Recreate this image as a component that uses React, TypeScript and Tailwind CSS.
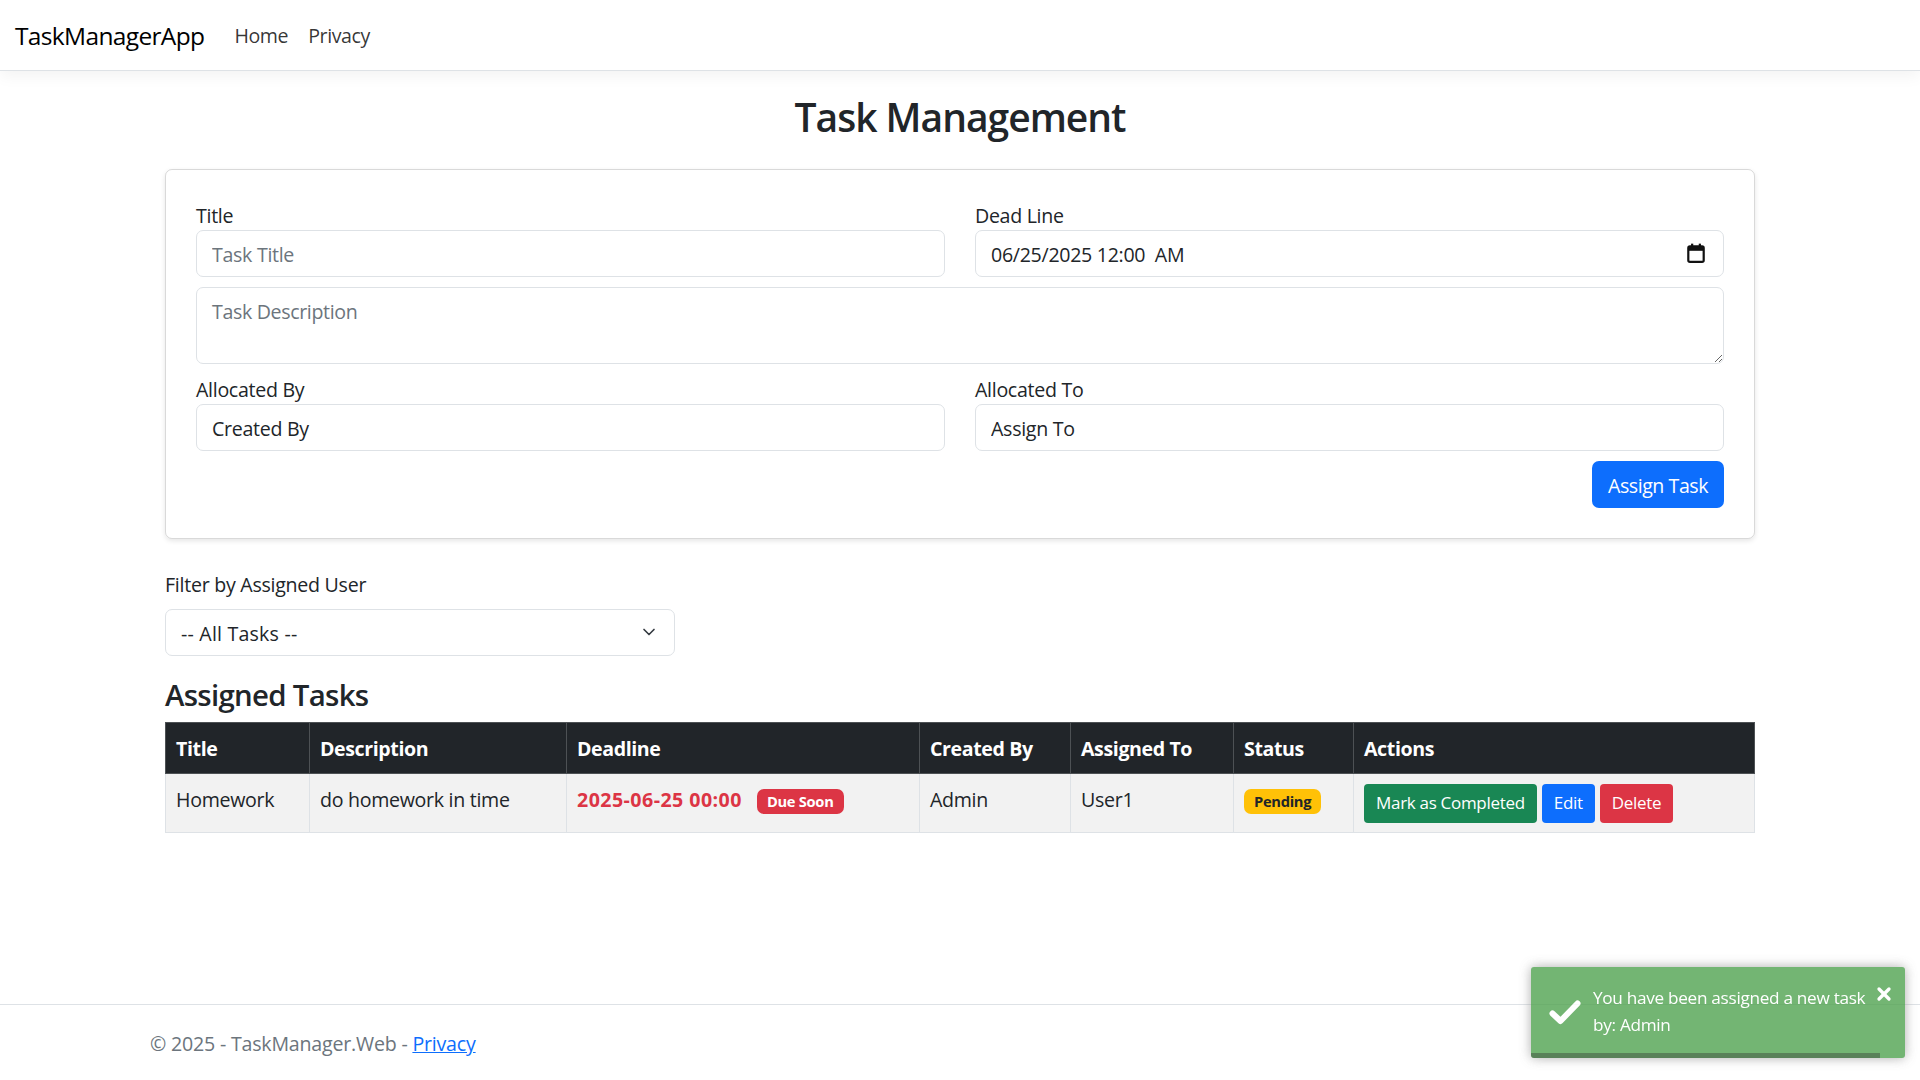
import { ChevronDown, X } from 'lucide-react';

const inputClass =
  'w-full h-[47px] px-[15px] pt-[2px] bg-white border border-[#dee2e6] rounded-[7px] text-[19.6px] text-[#212529] placeholder:text-[#6c757d] outline-none';

const columns = [
  { label: 'Title', width: 'w-[144px]' },
  { label: 'Description', width: 'w-[257px]' },
  { label: 'Deadline', width: 'w-[353px]' },
  { label: 'Created By', width: 'w-[151px]' },
  { label: 'Assigned To', width: 'w-[163px]' },
  { label: 'Status', width: 'w-[120px]' },
  { label: 'Actions', width: 'w-[401px]' },
];

const cellClass = 'px-[10px] pt-[11px] border border-[#dee2e6] align-top';

const Field = ({ label, children }: { label: string; children: React.ReactNode }) => (
  <div className="flex-1">
    <label className="block h-[30px] leading-[32px] text-[19.6px] text-[#212529]">{label}</label>
    {children}
  </div>
);

export default function App() {
  return (
    <div className="min-h-screen flex flex-col bg-white text-[#212529] text-[19.6px] tracking-[-0.3px] font-['Open_Sans',sans-serif]">
      {/* Navbar */}
      <nav className="h-[71px] shrink-0 flex items-center pl-[15px] pt-[2px] border-b border-[#dee2e6] shadow-[0_5px_15px_rgba(0,0,0,0.05)]">
        <a className="text-[24.5px] tracking-[-0.65px] text-black mr-[30px]">TaskManagerApp</a>
        <a className="text-[19.6px] tracking-[-0.4px] text-black/80 mr-[20px]">Home</a>
        <a className="text-[19.6px] tracking-[-0.4px] text-black/80">Privacy</a>
      </nav>

      <main className="w-[1590px] mx-auto">
        <h1 className="mt-[22px] mb-[29px] h-[47px] leading-[47px] text-center text-[39px] tracking-[-1px] font-semibold">
          Task Management
        </h1>

        {/* Form card */}
        <div className="h-[370px] px-[30px] pt-[30px] border border-black/15 rounded-[7px] shadow-[0_2px_5px_rgba(0,0,0,0.1)]">
          <div className="flex gap-[30px]">
            <Field label="Title">
              <input className={inputClass} placeholder="Task Title" />
            </Field>
            <Field label="Dead Line">
              <div className="relative">
                <input className={`${inputClass} whitespace-pre`} readOnly value="06/25/2025 12:00  AM" />
                <svg className="absolute right-[17px] top-[12px] w-[22px] h-[22px]" viewBox="0 0 20 20" fill="none">
                  <rect x="3" y="4" width="14" height="14" rx="1.5" stroke="#111" strokeWidth="2" />
                  <rect x="3" y="4" width="14" height="4" fill="#111" />
                  <rect x="5.5" y="1.5" width="2" height="3" fill="#111" />
                  <rect x="12.5" y="1.5" width="2" height="3" fill="#111" />
                </svg>
              </div>
            </Field>
          </div>
          <textarea
            className="block w-full h-[77px] mt-[10px] px-[15px] pt-[9px] pb-[8px] border border-[#dee2e6] rounded-[7px] text-[19.6px] tracking-[-0.35px] placeholder:text-[#6c757d] outline-none"
            placeholder="Task Description"
          />
          <div className="flex gap-[30px] mt-[10px]">
            <Field label="Allocated By">
              <input className={inputClass} defaultValue="Created By" />
            </Field>
            <Field label="Allocated To">
              <input className={inputClass} defaultValue="Assign To" />
            </Field>
          </div>
          <div className="flex justify-end mt-[10px]">
            <button className="w-[132px] h-[47px] pt-[2px] bg-[#0d6efd] text-white text-[19.6px] tracking-[-0.45px] rounded-[7px]">
              Assign Task
            </button>
          </div>
        </div>

        {/* Filter */}
        <label className="block mt-[30px] h-[30px] leading-[32px] text-[19.6px] tracking-[-0.27px]">Filter by Assigned User</label>
        <div className="relative w-[510px] mt-[10px]">
          <select className="w-full h-[47px] px-[15px] pt-[2px] appearance-none bg-white border border-[#dee2e6] rounded-[7px] text-[19.6px] tracking-[0.2px] outline-none">
            <option>-- All Tasks --</option>
          </select>
          <ChevronDown className="absolute right-[16px] top-[13px] w-5 h-5 text-[#343a40] pointer-events-none" />
        </div>

        <h3 className="mt-[21px] mb-[9px] h-[36px] leading-[36px] text-[29.4px] tracking-[-0.7px] font-semibold">Assigned Tasks</h3>

        {/* Tasks table */}
        <table className="w-[1589px] table-fixed border-collapse">
          <thead>
            <tr className="h-[51px] bg-[#212529] text-white">
              {columns.map((col) => (
                <th key={col.label} className={`${col.width} px-[10px] pt-[2px] text-left text-[19.6px] tracking-[-0.4px] font-bold border border-[#4d5154]`}>
                  {col.label}
                </th>
              ))}
            </tr>
          </thead>
          <tbody>
            <tr className="h-[59px] bg-[#f2f2f2] text-[19.6px]">
              <td className={cellClass}>Homework</td>
              <td className={cellClass}>do homework in time</td>
              <td className={cellClass}>
                <span className="font-bold tracking-[0.45px] text-[#dc3545]">2025-06-25 00:00</span>
                <span className="inline-block ml-[15px] px-[10px] h-[25px] leading-[25px] align-[0px] rounded-[7px] bg-[#dc3545] text-white text-[14.7px] font-bold">
                  Due Soon
                </span>
              </td>
              <td className={cellClass}>Admin</td>
              <td className={cellClass}>User1</td>
              <td className={cellClass}>
                <span className="inline-block mt-[2px] px-[10px] h-[25px] leading-[25px] rounded-[7px] bg-[#ffc107] text-[#212529] text-[14.7px] tracking-[-0.3px] font-bold">
                  Pending
                </span>
              </td>
              <td className="px-[10px] border border-[#dee2e6]">
                <div className="flex gap-[5px]">
                  <button className="h-[39px] px-[12px] bg-[#198754] text-white text-[17px] rounded-[4px]">Mark as Completed</button>
                  <button className="h-[39px] px-[12px] bg-[#0d6efd] text-white text-[17px] rounded-[4px]">Edit</button>
                  <button className="h-[39px] px-[12px] bg-[#dc3545] text-white text-[17px] rounded-[4px]">Delete</button>
                </div>
              </td>
            </tr>
          </tbody>
        </table>
      </main>

      {/* Footer */}
      <footer className="mt-auto h-[76px] shrink-0 flex items-center pl-[150px] pt-[2px] border-t border-[#dee2e6] text-[#6c757d] text-[19.6px] tracking-[-0.2px]">
        <span>
          © 2025 - TaskManager.Web - <a className="text-[#0d6efd] underline">Privacy</a>
        </span>
      </footer>

      {/* Toast */}
      <div className="fixed right-[15px] top-[967px] w-[374px] h-[91px] bg-[#51a351] opacity-80 text-white rounded-[3px] shadow-[0_0_12px_#999] overflow-hidden">
        <svg className="absolute left-[18px] top-[33px] w-[32px] h-[25px]" viewBox="0 0 32 25" fill="none">
          <path d="M3.5 13.5 L11.5 21 L28.5 3.5" stroke="#fff" strokeWidth="6" strokeLinecap="round" strokeLinejoin="round" />
        </svg>
        <X className="absolute right-[11px] top-[17px] w-[20px] h-[20px]" strokeWidth={4} />
        <p className="absolute left-[62px] top-[17px] w-[285px] text-[17.2px] leading-[27px]">
          You have been assigned a new task by: Admin
        </p>
        <div className="absolute left-0 bottom-0 w-[349px] h-[5px] bg-black/40" />
      </div>
    </div>
  );
}
